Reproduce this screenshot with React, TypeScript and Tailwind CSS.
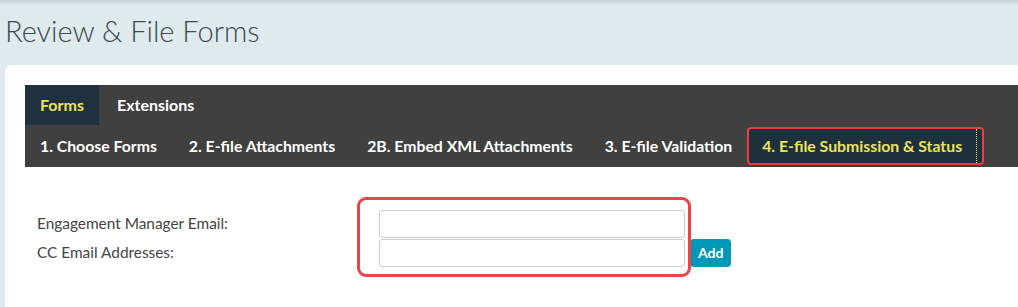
import React from "react";

const steps = [
  "1. Choose Forms",
  "2. E-file Attachments",
  "2B. Embed XML Attachments",
  "3. E-file Validation",
];

export default function App() {
  return (
    <div
      className="relative h-[307px] w-full overflow-hidden bg-[#dfeaed]"
      style={{ fontFamily: "Lato, 'Noto Sans', sans-serif" }}
    >
      {/* top shadow */}
      <div className="absolute inset-x-0 top-0 h-[6px] bg-gradient-to-b from-[#c3cfd3] to-transparent" />

      <h1 className="pl-[5px] pt-[14px] text-[29px] font-light leading-[34px] text-[#3d4852]">
        Review &amp; File Forms
      </h1>

      <div className="ml-[5px] mt-[17px] h-[300px] rounded-tl-[6px] bg-white pl-[20px] pt-[20px]">
        {/* tabs */}
        <div className="bg-[#404040]">
          <div className="flex h-[40px]">
            <div className="flex items-center bg-[#1f313e] px-[15px] text-[16px] font-bold text-[#ece35a]">
              Forms
            </div>
            <div className="flex items-center px-[18px] text-[16px] font-bold text-white">
              Extensions
            </div>
          </div>
          <div className="flex h-[42px] items-center">
            {steps.map((s, i) => (
              <div
                key={s}
                className={
                  i === 0
                    ? "pl-[15px] pr-[16px] text-[15.8px] font-bold text-white"
                    : "px-[16px] text-[15.8px] font-bold text-white"
                }
              >
                {s}
              </div>
            ))}
            <div className="relative -ml-[1px] flex h-[38px] items-center rounded-[4px] border-2 border-[#ef3b3f] bg-[#1f303d] pl-[13px] pr-[20px] text-[15.8px] font-bold text-[#ece35a]">
              4. E-file Submission &amp; Status
              <span className="absolute right-[5px] top-0 h-full border-r border-dotted border-[#ece35a]" />
            </div>
          </div>
        </div>

        {/* form */}
        <div className="relative mt-[42px] pl-[12px] text-[15.4px] text-[#444]">
          <div className="flex h-[29px] items-center">
            <label className="w-[342px]">Engagement Manager Email:</label>
            <input className="h-[28px] w-[306px] rounded-[3px] border border-[#ccc] bg-white" />
          </div>
          <div className="flex h-[29px] items-center">
            <label className="w-[342px]">CC Email Addresses:</label>
            <input className="h-[28px] w-[306px] rounded-[3px] border border-[#ccc] bg-white" />
            <button className="ml-[5px] h-[28px] rounded-[4px] bg-[#0098b9] px-[8px] text-[14px] font-bold text-white">
              Add
            </button>
          </div>
          {/* annotation box */}
          <div className="pointer-events-none absolute left-[332px] top-[-12px] h-[80px] w-[334px] rounded-[9px] border-[3px] border-[#f04245]" />
        </div>
      </div>
    </div>
  );
}
